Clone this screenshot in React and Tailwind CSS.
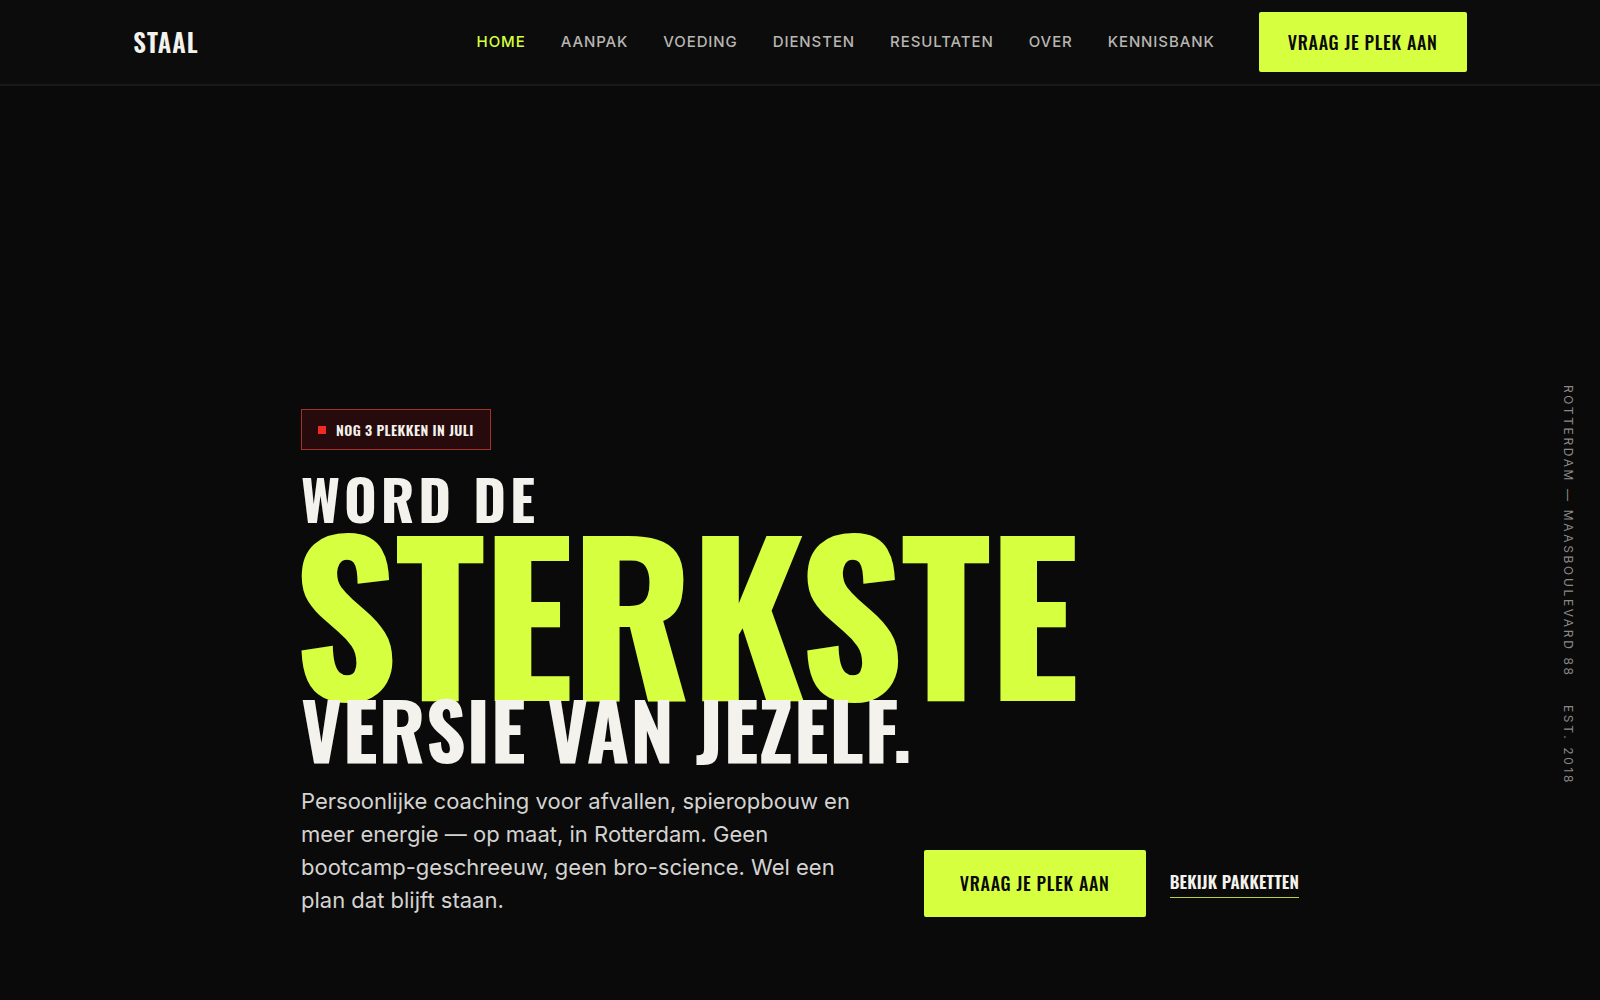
const NAV = ["Home", "Aanpak", "Voeding", "Diensten", "Resultaten", "Over", "Kennisbank"];

function Header() {
  return (
    <header className="border-b-2 border-[#19191a] bg-[#0c0c0c]">
      <div className="mx-auto flex h-[84px] w-10/12 items-center justify-between">
        <a
          href="#home"
          className="font-['Oswald',sans-serif] text-[25px] font-semibold tracking-[0.04em] text-[#f4f2ec]"
        >
          STAAL
        </a>
        <div className="flex items-center gap-11">
          <nav aria-label="Hoofdmenu" className="flex items-center gap-[35px]">
            {NAV.map((item, i) => (
              <a
                key={item}
                href={"#" + item.toLowerCase()}
                aria-current={i === 0 ? "page" : undefined}
                className={
                  i === 0
                    ? "text-[15px] leading-6 font-medium uppercase tracking-[0.06em] text-[#d6ff3f]"
                    : "text-[15px] leading-6 font-medium uppercase tracking-[0.06em] text-[#b8b6b2]"
                }
              >
                {item}
              </a>
            ))}
          </nav>
          <button
            type="button"
            className="h-[60px] rounded-xs bg-[#d6ff3f] px-[29px] font-['Oswald',sans-serif] text-[18px] font-medium tracking-[0.04em] text-[#0a0a0b]"
          >
            VRAAG JE PLEK AAN
          </button>
        </div>
      </div>
    </header>
  );
}

function Hero() {
  return (
    <main className="grid grow grid-cols-[1fr_minmax(0,998px)_1fr] pt-[84px]">
      <section className="col-start-2 flex flex-col items-start justify-end pb-[83px]">
        <p className="flex h-[41px] items-center gap-[10px] border border-[#a62f2c] bg-[#270b0c] px-4 font-['Oswald',sans-serif] text-[14px] leading-5 font-semibold tracking-[0.03em] text-[#f4f2ec]">
          <span className="size-2 bg-[#ef2b22]" />
          NOG 3 PLEKKEN IN JULI
        </p>
        <h1 className="mt-[19px] font-['Oswald',sans-serif] font-bold whitespace-nowrap text-[#f4f2ec]">
          <span className="block text-[56px] leading-[57px] tracking-[0.07em]">WORD DE</span>
          <span className="-ml-2 block text-[204px] leading-[166px] tracking-[-0.015em] text-[#d6ff3f]">
            STERKSTE
          </span>
          <span className="relative block text-[78px] leading-[72px] tracking-[0.01em]">
            VERSIE VAN JEZELF.
          </span>
        </h1>
        <div className="mt-[21px] flex w-full items-end justify-between">
          <p className="w-[562px] text-[22px] leading-[33px] text-[#d4d3d0]">
            Persoonlijke coaching voor afvallen, spieropbouw en meer energie — op maat, in
            Rotterdam. Geen bootcamp-geschreeuw, geen bro-science. Wel een plan dat blijft staan.
          </p>
          <div className="flex items-center gap-6">
            <button
              type="button"
              className="h-[67px] rounded-xs bg-[#d6ff3f] px-[36px] font-['Oswald',sans-serif] text-[18px] font-medium tracking-[0.04em] text-[#0a0a0b]"
            >
              VRAAG JE PLEK AAN
            </button>
            <a
              href="#diensten"
              className="border-b border-[#b4d539] pb-[3px] font-['Oswald',sans-serif] text-[17px] leading-[25px] font-semibold tracking-[0.01em] text-[#f4f2ec]"
            >
              BEKIJK PAKKETTEN
            </a>
          </div>
        </div>
      </section>
      <aside className="mr-[25px] flex items-center gap-7 self-center justify-self-end text-[12px] leading-[14px] tracking-[0.22em] text-[#8a8987] [writing-mode:vertical-rl]">
        <span>ROTTERDAM — MAASBOULEVARD 88</span>
        <span>EST. 2018</span>
      </aside>
    </main>
  );
}

export default function App() {
  return (
    <div className="flex min-h-screen flex-col bg-[#0a0a0b] font-['Inter',sans-serif]">
      <Header />
      <Hero />
    </div>
  );
}
